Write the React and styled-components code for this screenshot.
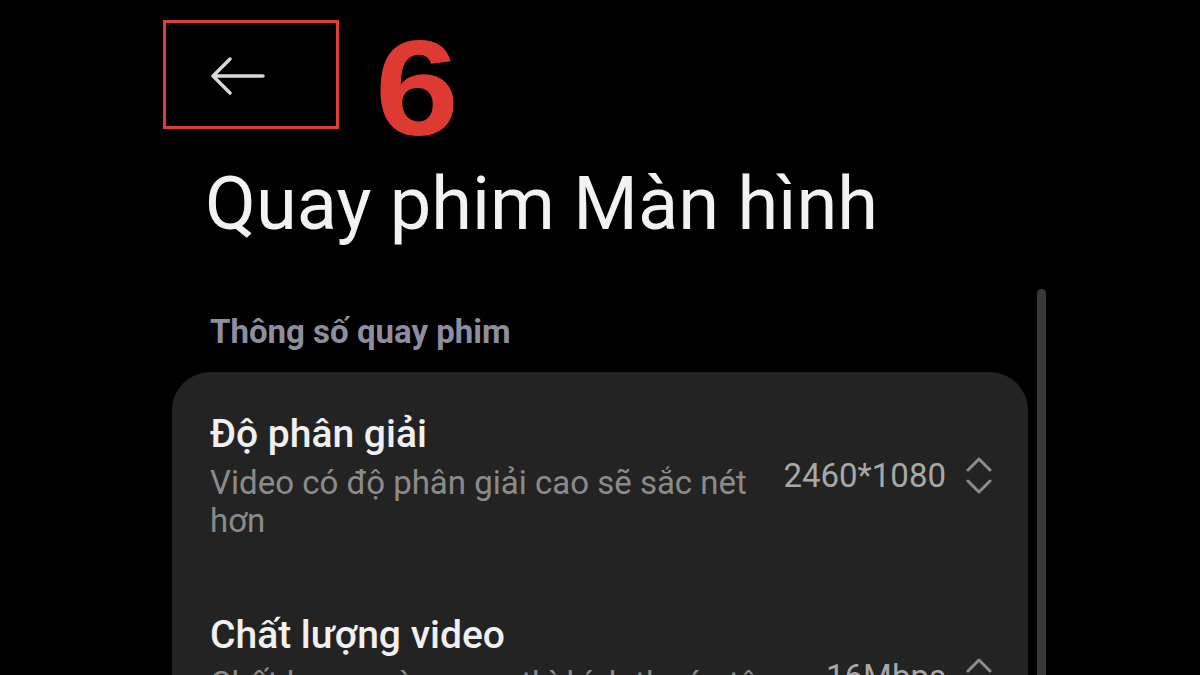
import React from "react";
import styled, { createGlobalStyle } from "styled-components";

const Global = createGlobalStyle`
  html, body { margin: 0; padding: 0; background: #000; }
  body { font-family: Roboto, "Noto Sans", sans-serif; overflow: hidden; }
`;

const Page = styled.div`
  width: 1200px;
  height: 675px;
  overflow: hidden;
  background: #000;
  display: flex;
  flex-direction: column;
`;

const Header = styled.div`
  display: flex;
  align-items: flex-start;
  padding: 20px 0 0 163px;
  gap: 36px;
`;

const BackBox = styled.div`
  width: 176px;
  height: 109px;
  box-sizing: border-box;
  border: 3px solid #d9413a;
  display: flex;
  align-items: center;
  padding-left: 45px;
  padding-top: 2px;
`;

const StepNumber = styled.div`
  font-family: "Liberation Sans", Arial, sans-serif;
  font-weight: 700;
  font-size: 136px;
  line-height: 136px;
  height: 138px;
  color: #df3a31;
  margin-top: 0;
  transform: scaleX(1.11);
  transform-origin: left center;
`;

const Title = styled.h1`
  margin: 3px 0 0 205px;
  font-family: Roboto, sans-serif;
  font-weight: 400;
  font-size: 74px;
  line-height: 86px;
  color: #f2f2f2;
`;

const ScrollArea = styled.div`
  display: flex;
  gap: 9px;
  padding-left: 172px;
  margin-top: 42px;
  flex: 1;
  min-height: 0;
`;

const Content = styled.div`
  width: 856px;
  display: flex;
  flex-direction: column;
`;

const Scrollbar = styled.div`
  width: 9px;
  height: 600px;
  border-radius: 5px;
  background: #393939;
`;

const SectionLabel = styled.div`
  padding-left: 38px;
  margin-top: 23px;
  font-size: 33px;
  font-weight: 700;
  line-height: 40px;
  color: #8e8e9f;
`;

const Card = styled.div`
  margin-top: 20px;
  background: #232323;
  border-radius: 38px 38px 0 0;
  display: flex;
  flex-direction: column;
`;

const Row = styled.div`
  display: flex;
  align-items: center;
  padding: 39px 36px 33px 38px;
  gap: 20px;
`;

const TextCol = styled.div`
  flex: 1;
  display: flex;
  flex-direction: column;
  max-width: 580px;
`;

const RowTitle = styled.div`
  font-size: 39px;
  font-weight: 500;
  line-height: 46px;
  color: #f0f0f0;
`;

const RowSub = styled.div`
  margin-top: 7px;
  font-size: 33px;
  line-height: 38px;
  color: #8b8b8b;
`;

const ValueWrap = styled.div`
  margin-left: auto;
  display: flex;
  align-items: center;
  gap: 20px;
`;

const Value = styled.div`
  font-size: 33px;
  line-height: 40px;
  color: #a8a8a8;
`;

const Arrow = () => (
  <svg width="54" height="38" viewBox="0 0 54 38" fill="none">
    <path d="M2 19 H52 M19 2 L2 19 L19 36" stroke="#d9d9d9" strokeWidth="3.4" strokeLinecap="round" strokeLinejoin="round" />
  </svg>
);

const Spinner = () => (
  <svg width="26" height="37" viewBox="0 0 26 37" fill="none">
    <path d="M2 13 L13 2 L24 13 M2 24 L13 35 L24 24" stroke="#8c8c8c" strokeWidth="3" strokeLinecap="round" strokeLinejoin="round" />
  </svg>
);

const rows = [
  { title: "Độ phân giải", sub: "Video có độ phân giải cao sẽ sắc nét hơn", value: "2460*1080" },
  { title: "Chất lượng video", sub: "Chất lượng càng cao thì kích thước tệp càng lớn", value: "16Mbps" },
];

export default function App() {
  return (
    <Page>
      <Global />
      <Header>
        <BackBox>
          <Arrow />
        </BackBox>
        <StepNumber>6</StepNumber>
      </Header>
      <Title>Quay phim Màn hình</Title>
      <ScrollArea>
        <Content>
          <SectionLabel>Thông số quay phim</SectionLabel>
          <Card>
            {rows.map((r) => (
              <Row key={r.title}>
                <TextCol>
                  <RowTitle>{r.title}</RowTitle>
                  <RowSub>{r.sub}</RowSub>
                </TextCol>
                <ValueWrap>
                  <Value>{r.value}</Value>
                  <Spinner />
                </ValueWrap>
              </Row>
            ))}
          </Card>
        </Content>
        <Scrollbar />
      </ScrollArea>
    </Page>
  );
}
